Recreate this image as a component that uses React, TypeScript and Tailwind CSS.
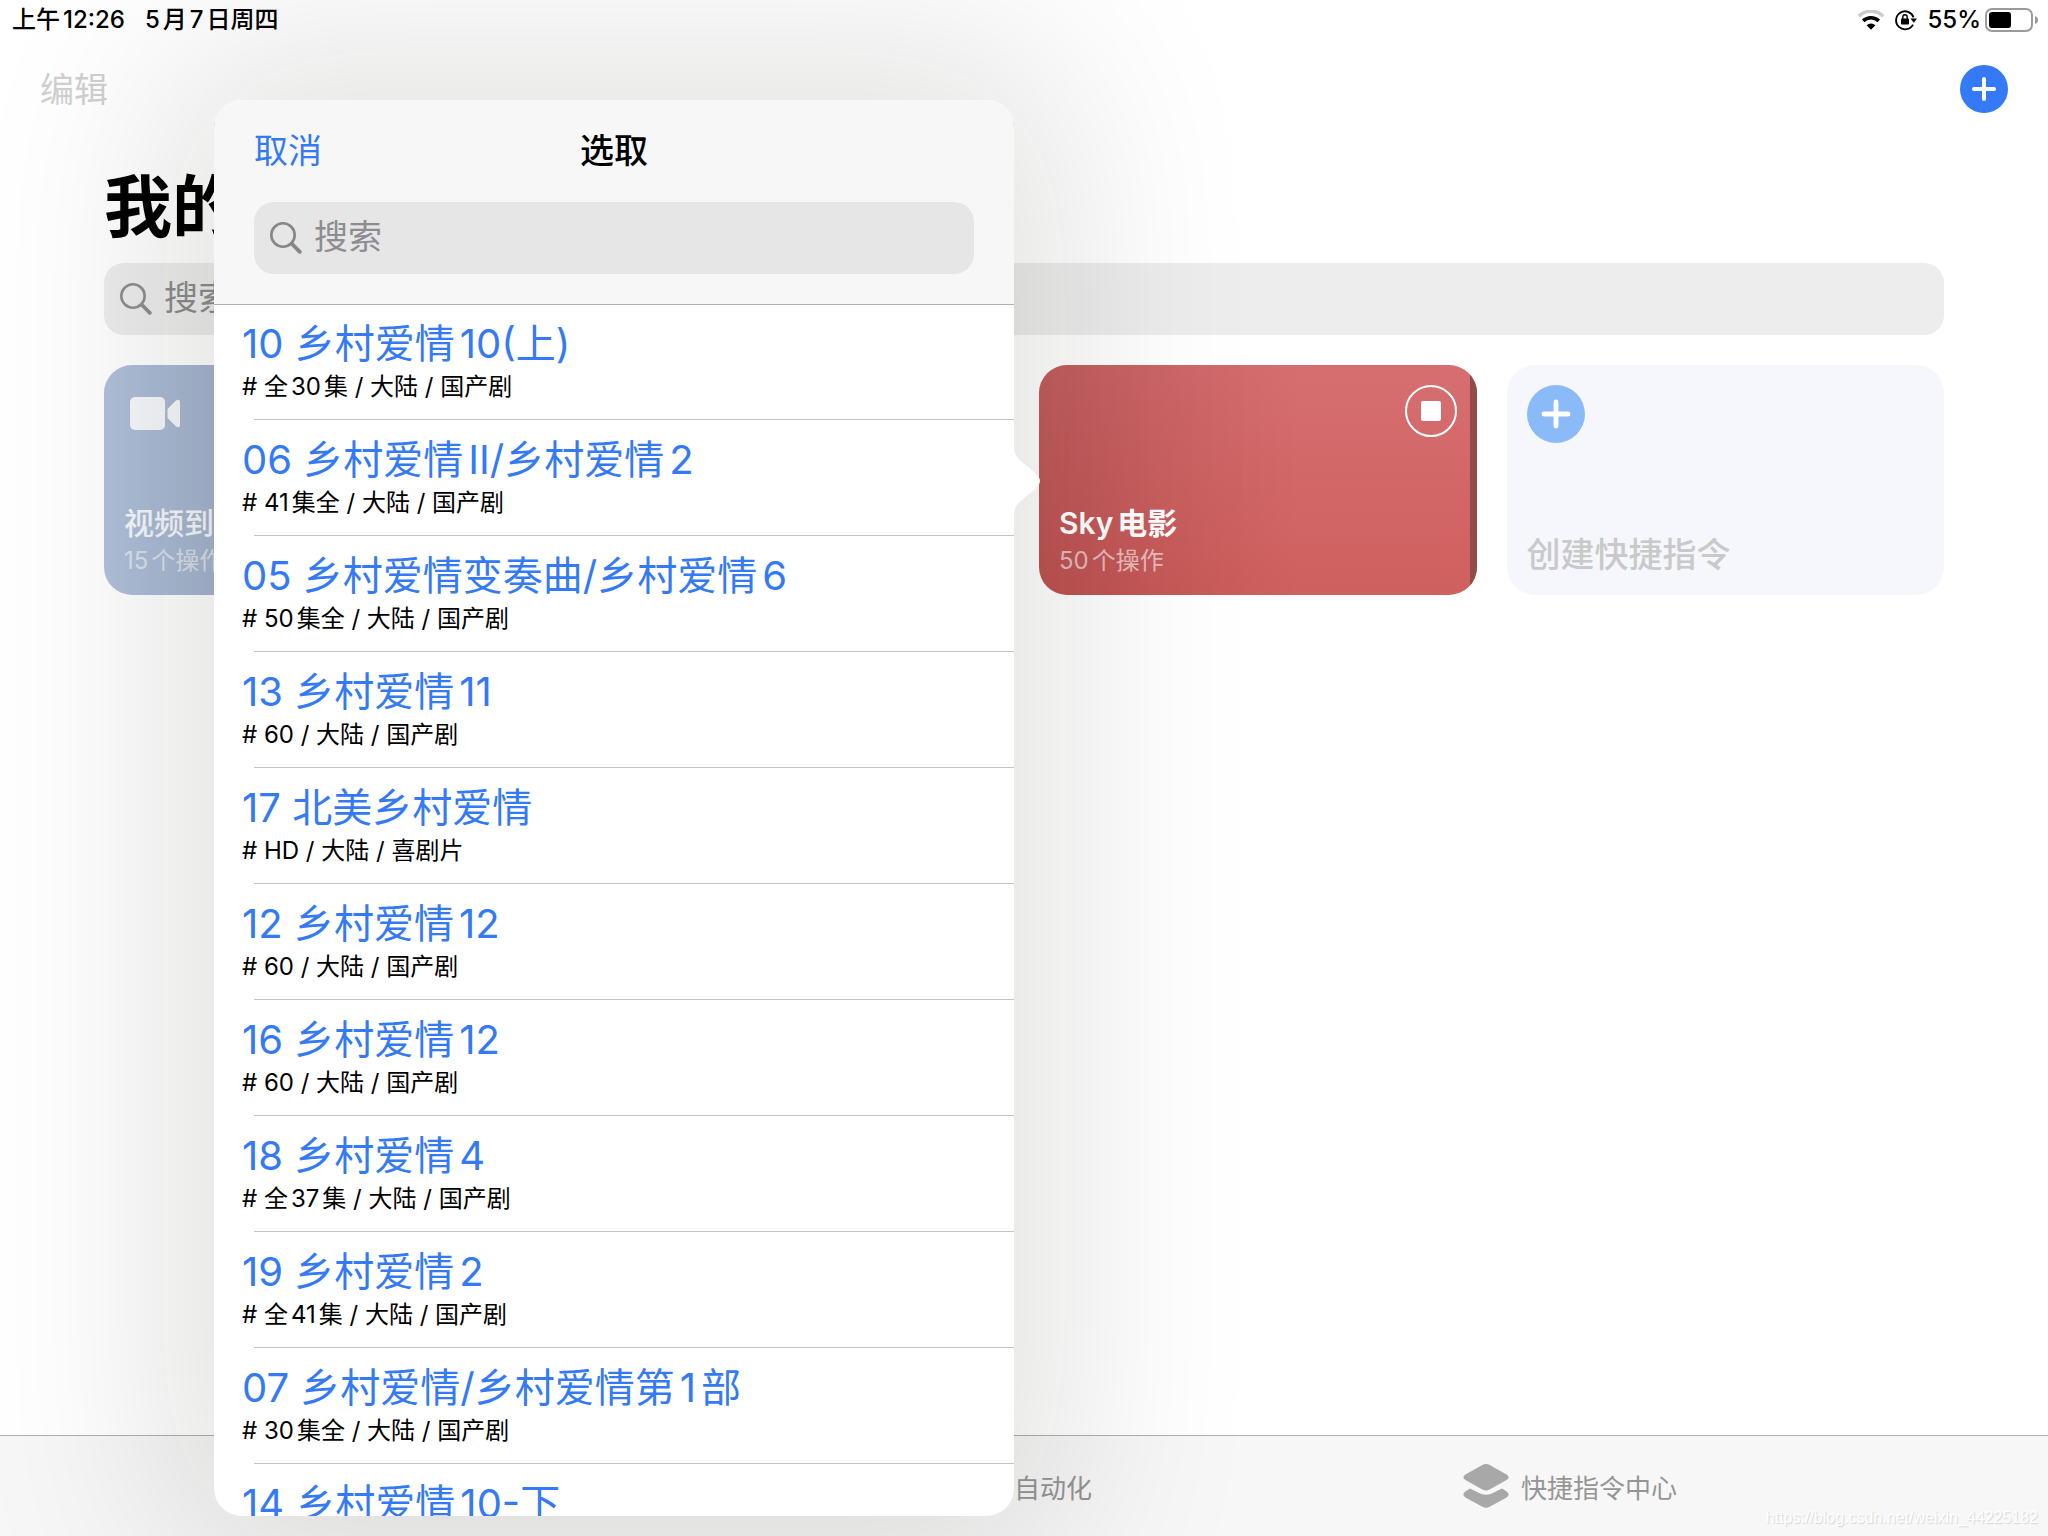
import React, { useState } from "react";

type Item = { title: string; info: string };

const items: Item[] = [
  { title: "10 乡村爱情10(上)", info: "# 全30集 / 大陆 / 国产剧" },
  { title: "06 乡村爱情II/乡村爱情2", info: "# 41集全 / 大陆 / 国产剧" },
  { title: "05 乡村爱情变奏曲/乡村爱情6", info: "# 50集全 / 大陆 / 国产剧" },
  { title: "13 乡村爱情11", info: "# 60 / 大陆 / 国产剧" },
  { title: "17 北美乡村爱情", info: "# HD / 大陆 / 喜剧片" },
  { title: "12 乡村爱情12", info: "# 60 / 大陆 / 国产剧" },
  { title: "16 乡村爱情12", info: "# 60 / 大陆 / 国产剧" },
  { title: "18 乡村爱情4", info: "# 全37集 / 大陆 / 国产剧" },
  { title: "19 乡村爱情2", info: "# 全41集 / 大陆 / 国产剧" },
  { title: "07 乡村爱情/乡村爱情第1部", info: "# 30集全 / 大陆 / 国产剧" },
  { title: "14 乡村爱情10-下", info: "" },
];

const SearchIcon = () => (
  <svg className="w-8 h-8 shrink-0" viewBox="0 0 32 32" fill="none" stroke="currentColor" strokeLinecap="round">
    <circle cx="13" cy="13" r="11.7" strokeWidth="2.6" />
    <path d="M22 22 L29.8 29.8" strokeWidth="3.8" />
  </svg>
);

const WifiIcon = () => (
  <svg className="w-7 h-5" viewBox="0 0 28 20" fill="none">
    <path d="M1.8 6.2 A17.6 17.6 0 0 1 26.2 6.2" stroke="#cbcbcb" strokeWidth="3.6" />
    <path d="M6.2 10.9 A11.2 11.2 0 0 1 21.8 10.9" stroke="#000" strokeWidth="3.6" />
    <path d="M14 19.8 L9.6 15.2 A6.3 6.3 0 0 1 18.4 15.2 Z" fill="#000" />
  </svg>
);

const RotationLockIcon = () => (
  <svg className="w-[22px] h-[22px]" viewBox="0 0 22 22" fill="none">
    <path d="M18 15.6 A9 9 0 1 1 18.6 8.4" stroke="#000" strokeWidth="1.8" />
    <path d="M15.4 9.4 L22 9.4 L18.8 13.8 Z" fill="#000" />
    <rect x="6" y="9.6" width="8" height="6" rx="0.8" fill="#000" />
    <path d="M7.8 10 V8 A2.2 2.2 0 0 1 12.2 8 V10" stroke="#000" strokeWidth="1.4" />
  </svg>
);

const BatteryIcon = () => (
  <svg className="w-[54px] h-6" viewBox="0 0 54 24" fill="none">
    <rect x="1" y="1" width="46" height="22" rx="6" stroke="#9b9b9b" strokeWidth="2" />
    <rect x="4" y="4" width="22" height="16" rx="3" fill="#000" />
    <path d="M50 8 Q53 9 53 12 Q53 15 50 16 Z" fill="#9b9b9b" />
  </svg>
);

const PlusIcon = ({ className }: { className: string }) => (
  <svg className={className} viewBox="0 0 48 48" fill="none">
    <circle cx="24" cy="24" r="24" fill="currentColor" />
    <path d="M24 14 V34 M14 24 H34" stroke="#fff" strokeWidth="4" strokeLinecap="round" />
  </svg>
);

const VideoIcon = () => (
  <svg className="w-[50px] h-[33px]" viewBox="0 0 50 33" fill="currentColor">
    <rect x="0" y="0" width="35" height="33" rx="5" />
    <path d="M37.5 12 L45.5 4 Q47 2.6 48.6 2.8 Q50 3.2 50 5 V28 Q50 29.8 48.6 30.2 Q47 30.4 45.5 29 L37.5 21 Z" />
  </svg>
);

const LayersIcon = () => (
  <svg className="w-[46px] h-11" viewBox="0 0 46 44" fill="currentColor">
    <path d="M19.4 1 Q23 -1 26.6 1 L43.6 10.4 Q47.6 13.2 43.6 16 L26.6 25.4 Q23 27.4 19.4 25.4 L2.4 16 Q-1.6 13.2 2.4 10.4 Z" />
    <path d="M7 24.4 L17.2 29.4 Q23 32.2 28.8 29.4 L39 24.4 L43.6 27.4 Q47.6 30.4 43.6 33.4 L26.6 42.8 Q23 44.8 19.4 42.8 L2.4 33.4 Q-1.6 30.4 2.4 27.4 Z" />
  </svg>
);

const Popover: React.FC = () => {
  const [query, setQuery] = useState("");

  return (
    <div
      role="dialog"
      aria-label="选取"
      className="absolute left-[214px] top-[100px] bottom-5 w-[800px] rounded-[28px] shadow-[0_0_200px_50px_rgba(20,20,0,0.12)]"
    >
      {/* ARROW */}
      <svg className="absolute -right-[26px] top-[347px] w-[26px] h-[68px] text-white" viewBox="0 0 26 68" fill="currentColor">
        <path d="M0 0 C0 8 4 12 9 16 L20 25 Q26 30 26 34 Q26 38 20 43 L9 52 C4 56 0 60 0 68 Z" />
      </svg>

      <div className="flex flex-col h-full overflow-hidden rounded-[28px] bg-white">
        {/* HEADER */}
        <div className="h-[204px] shrink-0 px-10 bg-[#f7f7f7] relative shadow-[0_1px_0_#afafaf]">
          <div className="h-[102px] grid grid-cols-3 items-center text-[34px] leading-[48px]">
            <button className="justify-self-start text-[#347af6]">取消</button>
            <h2 className="text-center font-medium">选取</h2>
          </div>
          <label className="h-[72px] px-4 flex items-center gap-3 rounded-[20px] bg-[#e6e6e6] text-[#85858a]">
            <SearchIcon />
            <input
              type="text"
              aria-label="搜索"
              placeholder="搜索"
              value={query}
              onChange={(e) => setQuery(e.target.value)}
              className="flex-1 min-w-0 pb-0.5 bg-transparent outline-none text-[34px] leading-[48px] placeholder:text-[#8c8c91]"
            />
          </label>
        </div>

        {/* LIST */}
        <ul className="flex-1 min-h-0 overflow-hidden">
          {items.map((item) => (
            <li key={item.title} className="h-[116px] flex flex-col">
              <button className="flex-1 flex flex-col items-start pl-7 pt-4 text-left whitespace-nowrap">
                <span className="text-[40px] leading-[48px] text-[#347af6]">{item.title}</span>
                <span className="text-2xl leading-[38px] text-black">{item.info}</span>
              </button>
              <div className="ml-10 h-px shrink-0 bg-[#c4c4c6]" />
            </li>
          ))}
        </ul>
      </div>
    </div>
  );
};

const App: React.FC = () => {
  const [search, setSearch] = useState("");

  return (
    <div className="relative min-h-screen flex flex-col overflow-hidden bg-white text-black font-['Inter','Noto_Sans_CJK_SC',sans-serif] [text-autospace:normal]">
      {/* STATUS BAR */}
      <div className="h-10 pl-3 pr-[9px] flex items-center justify-between text-2xl font-medium">
        <div className="flex gap-5">
          <span>上午12:26</span>
          <span>5月7日周四</span>
        </div>
        <div className="flex items-center">
          <WifiIcon />
          <span className="mx-2.5">
            <RotationLockIcon />
          </span>
          <span className="mr-1">55%</span>
          <BatteryIcon />
        </div>
      </div>

      {/* NAV */}
      <div className="h-[98px] px-10 flex items-center justify-between">
        <button className="text-[34px] text-[#d0d0d0]">编辑</button>
        <button aria-label="添加" className="text-[#347af6]">
          <PlusIcon className="w-12 h-12" />
        </button>
      </div>

      <main className="flex-1 px-[104px] pt-6">
        <h1 className="text-[68px] leading-[90px] font-bold">我的快捷指令</h1>

        <label className="mt-[11px] h-[72px] px-4 flex items-center gap-3 rounded-[20px] bg-[#ededed] text-[#8f8f92]">
          <SearchIcon />
          <input
            type="text"
            aria-label="搜索"
            placeholder="搜索"
            value={search}
            onChange={(e) => setSearch(e.target.value)}
            className="flex-1 min-w-0 pb-0.5 bg-transparent outline-none text-[34px] leading-[48px] placeholder:text-[#8c8c8f]"
          />
        </label>

        {/* CARDS */}
        <div className="mt-[30px] grid grid-cols-4 gap-[30px]">
          <div className="h-[230px] px-5 pt-5 pb-4 flex flex-col rounded-[28px] bg-linear-to-r from-[#b0c1db] to-[#8494b0] text-white/90">
            <div className="pl-1.5 pt-3">
              <VideoIcon />
            </div>
            <div className="mt-auto">
              <p className="text-[30px] leading-10 font-medium">视频到</p>
              <p className="text-2xl leading-9 text-white/55">15个操作</p>
            </div>
          </div>

          <div className="col-start-3 h-[230px] px-5 pt-5 pb-4 flex flex-col rounded-[28px] overflow-hidden relative bg-linear-to-b from-[#d66e70] to-[#cf605f]">
            <div className="absolute inset-0 bg-linear-to-r from-[#5a0000]/15 to-transparent to-60%" />
            {/* progress edge */}
            <div className="absolute inset-y-0 right-0 w-[7px] bg-[#924a4b]" />
            <button aria-label="停止" className="relative self-end w-13 h-13 rounded-full border-2 border-white flex items-center justify-center">
              <span className="w-5 h-5 rounded-xs bg-white" />
            </button>
            <div className="relative mt-auto">
              <p className="text-[30px] leading-10 font-semibold text-white">Sky电影</p>
              <p className="text-2xl leading-9 text-white/60">50个操作</p>
            </div>
          </div>

          <button className="h-[230px] px-5 pt-5 pb-4 flex flex-col items-start justify-between rounded-[28px] bg-[#f5f7fd]">
            <span className="text-[#8bbaf9]">
              <PlusIcon className="w-[58px] h-[58px]" />
            </span>
            <span className="text-[34px] leading-[48px] font-medium text-[#c8c9c8]">创建快捷指令</span>
          </button>
        </div>
      </main>

      {/* TAB BAR */}
      <nav className="h-[101px] flex justify-center border-t border-[#b0b0b0] bg-[#f7f7f7] text-[26px] text-[#959595]">
        <div className="w-4/5 grid grid-cols-3">
          <a href="#automation" className="col-start-2 flex items-center justify-center gap-3">
            <LayersIcon />
            <span className="pt-1">自动化</span>
          </a>
          <a href="#gallery" className="flex items-center justify-center gap-3">
            <span className="text-[#a8a8a8]">
              <LayersIcon />
            </span>
            <span className="pt-1">快捷指令中心</span>
          </a>
        </div>
      </nav>

      <Popover />

      <p className="absolute right-2.5 bottom-2 text-base leading-5 text-white font-['Liberation_Sans',sans-serif] [text-shadow:1px_1px_1px_#d4d4d4]">
        https://blog.csdn.net/weixin_44225182
      </p>
    </div>
  );
};

export default App;
